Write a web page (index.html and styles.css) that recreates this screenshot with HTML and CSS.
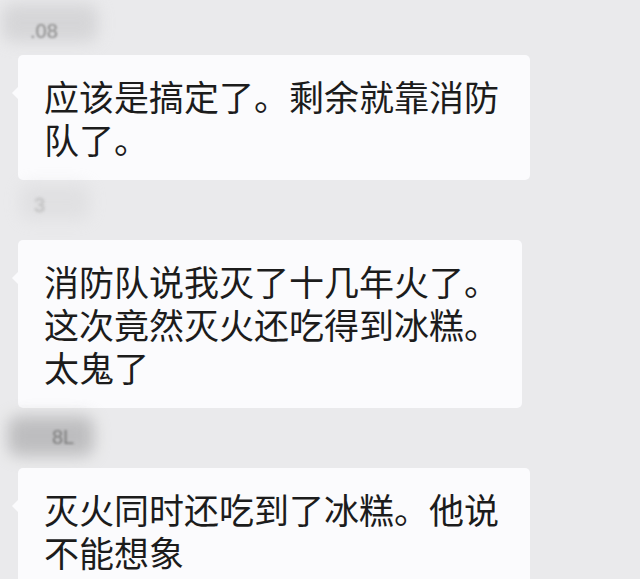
FILE: index.html
```html
<!DOCTYPE html>
<html lang="zh-CN">
<head>
<meta charset="utf-8">
<title>聊天记录</title>
<link rel="stylesheet" href="styles.css">
</head>
<body>
<div class="chat">
  <div class="msg">
    <div class="name name-first"><span class="smudge"></span><span class="stamp">.08</span></div>
    <div class="bubble bubble-wide">应该是搞定了。剩余就靠消防<br>队了。</div>
  </div>
  <div class="msg">
    <div class="name name-faint"><span class="smudge smudge-faint"></span><span class="stamp stamp-faint">3</span></div>
    <div class="bubble bubble-mid">消防队说我灭了十几年火了。<br>这次竟然灭火还吃得到冰糕。<br>太鬼了</div>
  </div>
  <div class="msg">
    <div class="name name-dark"><span class="smudge smudge-dark"></span><span class="stamp stamp-dark">8L</span></div>
    <div class="bubble bubble-wide">灭火同时还吃到了冰糕。他说<br>不能想象</div>
  </div>
</div>
</body>
</html>
```

FILE: styles.css
```css
html, body {
  margin: 0;
  padding: 0;
  background: #eaeaec;
  height: 100%;
  overflow: hidden;
}

.chat {
  display: flex;
  flex-direction: column;
  padding: 0 0 0 18px;
  font-family: "Noto Sans CJK SC", "Noto Sans", sans-serif;
}

.msg {
  display: flex;
  flex-direction: column;
}

.name {
  position: relative;
  height: 60px;
}

.name-first {
  height: 55px;
  margin-left: -18px;
}

.name-faint {
  margin-left: -4px;
}

.name-dark {
  margin-left: -14px;
}

.smudge {
  position: absolute;
  left: 2px;
  top: 4px;
  width: 96px;
  height: 38px;
  background: #cfcfd1;
  border-radius: 10px;
  filter: blur(8px);
  opacity: 0.75;
}

.smudge-faint {
  left: 6px;
  top: 4px;
  width: 70px;
  height: 36px;
  opacity: 0.35;
}

.smudge-dark {
  left: 4px;
  top: 8px;
  width: 86px;
  height: 40px;
  background: #b9b9bb;
  opacity: 0.9;
}

.stamp {
  position: absolute;
  left: 30px;
  top: 20px;
  font-family: "Liberation Sans", sans-serif;
  font-size: 20px;
  color: #8a8a8a;
  filter: blur(1.2px);
}

.stamp-faint {
  left: 20px;
  top: 14px;
  color: #b8b8b8;
  filter: blur(1.8px);
}

.stamp-dark {
  left: 48px;
  top: 18px;
  color: #7c7c7c;
}

.bubble {
  position: relative;
  box-sizing: border-box;
  background: #fbfbfd;
  border-radius: 5px;
  padding: 19px 20px 20px 26px;
  font-size: 35px;
  line-height: 43px;
  color: #1c1c1c;
  white-space: nowrap;
}

.bubble::before {
  content: "";
  position: absolute;
  left: -6px;
  top: 32px;
  border-style: solid;
  border-width: 6px 6px 6px 0;
  border-color: transparent #fbfbfd transparent transparent;
}

.bubble-wide {
  width: 512px;
}

.bubble-mid {
  width: 504px;
}
```
